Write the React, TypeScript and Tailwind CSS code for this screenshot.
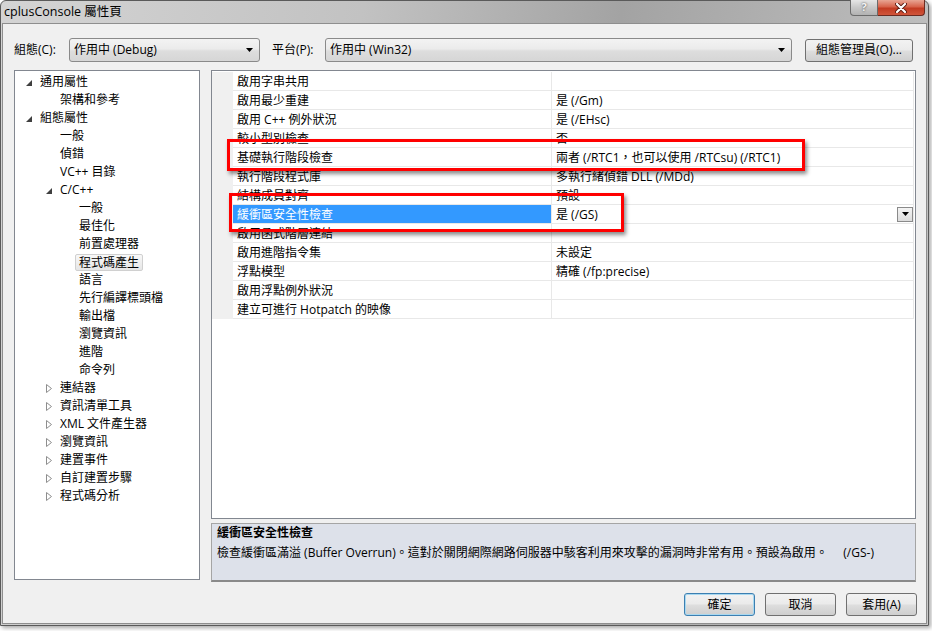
import React from 'react';

type TreeItem = {
  label: string;
  level: number;
  expander?: 'open' | 'closed';
  selected?: boolean;
};

type GridRow = {
  name: string;
  value: string;
  selected?: boolean;
};

const treeItems: TreeItem[] = [
  { label: '通用屬性', level: 0, expander: 'open' },
  { label: '架構和參考', level: 1 },
  { label: '組態屬性', level: 0, expander: 'open' },
  { label: '一般', level: 1 },
  { label: '偵錯', level: 1 },
  { label: 'VC++ 目錄', level: 1 },
  { label: 'C/C++', level: 1, expander: 'open' },
  { label: '一般', level: 2 },
  { label: '最佳化', level: 2 },
  { label: '前置處理器', level: 2 },
  { label: '程式碼產生', level: 2, selected: true },
  { label: '語言', level: 2 },
  { label: '先行編譯標頭檔', level: 2 },
  { label: '輸出檔', level: 2 },
  { label: '瀏覽資訊', level: 2 },
  { label: '進階', level: 2 },
  { label: '命令列', level: 2 },
  { label: '連結器', level: 1, expander: 'closed' },
  { label: '資訊清單工具', level: 1, expander: 'closed' },
  { label: 'XML 文件產生器', level: 1, expander: 'closed' },
  { label: '瀏覽資訊', level: 1, expander: 'closed' },
  { label: '建置事件', level: 1, expander: 'closed' },
  { label: '自訂建置步驟', level: 1, expander: 'closed' },
  { label: '程式碼分析', level: 1, expander: 'closed' },
];

const gridRows: GridRow[] = [
  { name: '啟用字串共用', value: '' },
  { name: '啟用最少重建', value: '是 (/Gm)' },
  { name: '啟用 C++ 例外狀況', value: '是 (/EHsc)' },
  { name: '較小型別檢查', value: '否' },
  { name: '基礎執行階段檢查', value: '兩者 (/RTC1，也可以使用 /RTCsu) (/RTC1)' },
  { name: '執行階段程式庫', value: '多執行緒偵錯 DLL (/MDd)' },
  { name: '結構成員對齊', value: '預設' },
  { name: '緩衝區安全性檢查', value: '是 (/GS)', selected: true },
  { name: '啟用函式階層連結', value: '' },
  { name: '啟用進階指令集', value: '未設定' },
  { name: '浮點模型', value: '精確 (/fp:precise)' },
  { name: '啟用浮點例外狀況', value: '' },
  { name: '建立可進行 Hotpatch 的映像', value: '' },
];

// indent for each tree level (text starts 14px after this)
const indentClass = ['pl-[11px]', 'pl-[31px]', 'pl-[50px]'];

const ArrowDown = () => (
  <svg width="7" height="4" viewBox="0 0 7 4">
    <polygon points="0,0 7,0 3.5,4" fill="#000" />
  </svg>
);

const Expander = ({ kind }: { kind?: 'open' | 'closed' }) => {
  if (kind === 'open') {
    return (
      <svg width="6" height="6" viewBox="0 0 6 6" className="mt-[2px]">
        <polygon points="6,0 6,6 0,6" fill="#3f3f3f" />
      </svg>
    );
  }
  if (kind === 'closed') {
    return (
      <svg width="6" height="9" viewBox="0 0 6 9" className="mt-[1px]">
        <polygon points="0.5,0.5 5.5,4.5 0.5,8.5" fill="#fff" stroke="#8e8e8e" strokeWidth="1" />
      </svg>
    );
  }
  return null;
};

const Combo = ({ text, width }: { text: string; width: string }) => (
  <div
    className={`${width} h-[24px] flex items-center justify-between pl-[4px] pr-[6px] rounded-[3px] border border-[#8a8a8a] bg-[linear-gradient(180deg,#f3f3f3_0%,#ebebeb_45%,#dddddd_55%,#d6d6d6_100%)]`}
  >
    <span>{text}</span>
    <ArrowDown />
  </div>
);

const Button = ({ text, width, primary }: { text: string; width: string; primary?: boolean }) => (
  <div
    className={`${width} h-[23px] flex items-center justify-center rounded-[3px] border bg-[linear-gradient(180deg,#f2f2f2_0%,#ebebeb_45%,#dddddd_55%,#cfcfcf_100%)] ${
      primary ? 'border-[#3c7fb1] shadow-[inset_0_0_0_1px_#a8d8f0]' : 'border-[#707070]'
    }`}
  >
    {text}
  </div>
);

export default function App() {
  return (
    <div className="relative w-[932px] h-[631px] bg-white overflow-hidden text-[12px] text-black font-['Open_Sans','Noto_Sans_CJK_TC',sans-serif]">
      <div className="w-[929px] h-[626px] flex flex-col rounded-t-[6px] border border-[#5a5a5a] shadow-[2px_2px_4px_rgba(0,0,0,0.35)] bg-[linear-gradient(100deg,#d4d4d4_0%,#c2c2c2_35%,#a3a3a3_60%,#b6b6b6_82%,#c8c8c8_100%)]">
        {/* title bar */}
        <div className="relative h-[22px] flex items-center pl-[3px]">
          <span className="leading-[16px] text-[12.5px]">cplusConsole 屬性頁</span>
          <div className="absolute right-[3px] top-[-1px] flex">
            <div className="w-[28px] h-[16px] flex items-center justify-center rounded-bl-[4px] border border-[#6b6b6b] border-t-0 bg-[linear-gradient(180deg,#e6e6e6_0%,#c8c8c8_50%,#b2b2b2_100%)] text-[11px] font-bold text-[#f4f4f4] [text-shadow:0_0_2px_#333]">
              ?
            </div>
            <div className="w-[47px] h-[16px] flex items-center justify-center rounded-br-[4px] border border-[#6b2a20] border-t-0 border-l-0 bg-[linear-gradient(180deg,#e8a593_0%,#d7634b_45%,#c23b22_55%,#d0553a_100%)]">
              <svg width="12" height="10" viewBox="0 0 12 10">
                <path d="M2 1 L10 9 M10 1 L2 9" stroke="#5a1a10" strokeWidth="4" strokeLinecap="round" />
                <path d="M2 1 L10 9 M10 1 L2 9" stroke="#fff" strokeWidth="2.2" strokeLinecap="round" />
              </svg>
            </div>
          </div>
        </div>

        {/* dialog body */}
        <div className="flex-1 mx-[1px] mb-[1px] flex flex-col bg-[#f0f0f0] border border-[#8e8e8e] pl-[11px] pr-[9px] pt-[14px]">
          {/* toolbar */}
          <div className="flex items-center h-[24px]">
            <span className="w-[55px]">組態(C):</span>
            <Combo text="作用中 (Debug)" width="w-[191px]" />
            <span className="ml-[12px] w-[53px]">平台(P):</span>
            <Combo text="作用中 (Win32)" width="w-[467px]" />
            <div className="ml-[13px]">
              <Button text="組態管理員(O)..." width="w-[108px]" />
            </div>
          </div>

          {/* main */}
          <div className="flex gap-[11px] mt-[8px]">
            {/* tree */}
            <div className="w-[186px] h-[510px] border border-[#828790] bg-white pt-[2px]">
              {treeItems.map((item, i) => (
                <div key={i} className={`h-[18px] flex items-center ${indentClass[item.level]}`}>
                  <div className="w-[14px] flex items-center">
                    <Expander kind={item.expander} />
                  </div>
                  {item.selected ? (
                    <span className="-ml-[4px] px-[3px] h-[17px] leading-[15px] rounded-[2px] border border-[#d0d0d0] bg-[linear-gradient(180deg,#f8f8f8_0%,#e6e6e6_100%)]">
                      {item.label}
                    </span>
                  ) : (
                    <span className="leading-[18px]">{item.label}</span>
                  )}
                </div>
              ))}
            </div>

            {/* properties */}
            <div className="w-[705px] h-[512px] flex flex-col">
              <div className="h-[449px] border border-[#828790] bg-white pt-[1px]">
                {gridRows.map((row, i) => (
                  <div key={i} className="h-[19px] flex">
                    <div className="w-[21px] bg-[#f0f0f0]" />
                    <div
                      className={`w-[319px] pl-[4px] pt-[1px] flex items-center border-r border-b border-[#e8e8e8] ${
                        row.selected ? 'bg-[#3399ff] text-white' : ''
                      }`}
                    >
                      {row.name}
                    </div>
                    <div className="flex-1 mr-[1px] pl-[4px] flex items-center justify-between border-b border-r border-[#e8e8e8]">
                      <span className="pt-[1px]">{row.value}</span>
                      {row.selected && (
                        <div className="w-[16px] h-[15px] flex items-center justify-center border border-[#8a8a8a] bg-[linear-gradient(180deg,#f4f4f4_0%,#dcdcdc_100%)]">
                          <ArrowDown />
                        </div>
                      )}
                    </div>
                  </div>
                ))}
              </div>
              <div className="mt-[4px] h-[59px] border border-[#a5a5a5] border-b-[#8a8a8a] border-b-2 bg-[#dde1ea] pl-[5px]">
                <div className="font-bold leading-[18px]">緩衝區安全性檢查</div>
                <div className="mt-[2px] leading-[18px]">
                  檢查緩衝區滿溢 (Buffer Overrun)。這對於關閉網際網路伺服器中駭客利用來攻擊的漏洞時非常有用。預設為啟用。&nbsp;&nbsp;&nbsp;&nbsp;&nbsp;(/GS-)
                </div>
              </div>
            </div>
          </div>

          {/* buttons */}
          <div className="flex justify-end gap-[10px] mt-[11px]">
            <Button text="確定" width="w-[71px]" primary />
            <Button text="取消" width="w-[71px]" />
            <Button text="套用(A)" width="w-[71px]" />
          </div>
        </div>
      </div>

      {/* red highlight frames drawn over the screenshot */}
      <div className="absolute left-[227px] top-[139px] w-[578px] h-[32px] border-[3px] border-[#ff0000] shadow-[2px_3px_4px_rgba(0,0,0,0.45)]" />
      <div className="absolute left-[229px] top-[193px] w-[395px] h-[39px] border-[3px] border-[#ff0000] shadow-[2px_3px_4px_rgba(0,0,0,0.45)]" />
    </div>
  );
}
